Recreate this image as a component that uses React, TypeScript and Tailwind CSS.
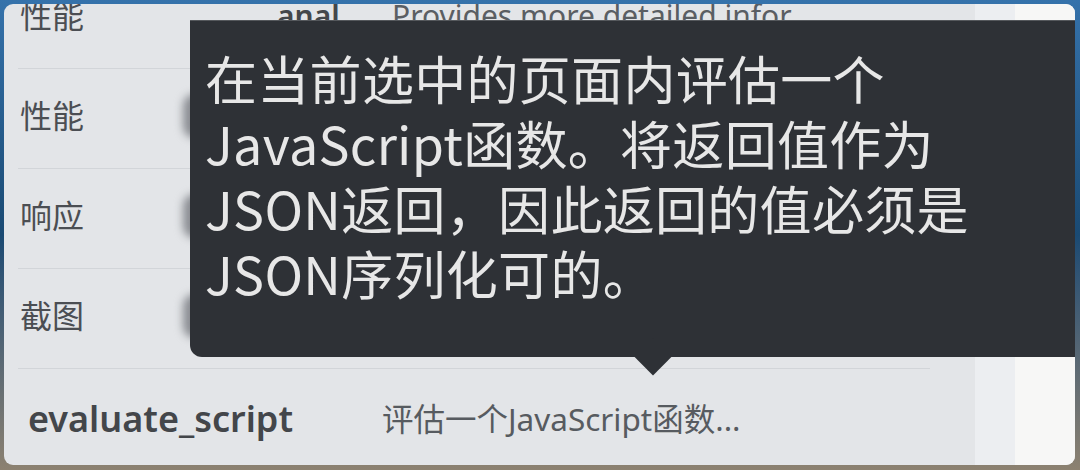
import React from "react";

const CJK = '"Noto Sans", "Noto Sans CJK SC", sans-serif';
const CJK_ONLY = '"Noto Sans CJK SC", "Noto Sans", sans-serif';

function Row({
  label,
  children,
  blob = false,
}: {
  label?: string;
  children?: React.ReactNode;
  blob?: boolean;
}) {
  return (
    <div className="h-[100px] shrink-0 ml-[14px] mr-[45px] pb-[6px] border-b border-[#d2d5d9] flex items-center">
      {label !== undefined && (
        <div className="w-[165px] pl-[2px] text-[32px] text-[#4b4e53] leading-none">{label}</div>
      )}
      {blob && <div className="w-[40px] h-[44px] rounded-[12px] bg-[#8a8d92] blur-[4px]" />}
      {children}
    </div>
  );
}

export default function App() {
  return (
    <div
      className="w-[1080px] h-[470px] pt-[4px] pl-[4px] pr-[5px] pb-[5px] bg-gradient-to-b from-[#3572ab] via-[#1a4a73] to-[#8c8170]"
      style={{ fontFamily: CJK }}
    >
      <div className="relative h-full w-full rounded-[9px] overflow-hidden bg-[#e3e5e8] flex">
        <div className="w-[971px] flex flex-col mt-[-35px]">
          <Row label="性能">
            <div className="ml-[94px] w-[62px] text-[30px] font-semibold text-[#44474b] leading-none whitespace-nowrap overflow-hidden">
              analyze_performance
            </div>
            <div className="ml-[53px] text-[30px] text-[#5a5e63] leading-none whitespace-nowrap">
              Provides more detailed infor
            </div>
          </Row>
          <Row label="性能" blob />
          <Row label="响应" blob />
          <Row label="截图" blob />
          <div className="h-[100px] shrink-0 ml-[14px] mr-[45px] flex items-center">
            <div className="w-[364px] pl-[10px] text-[36px] font-semibold text-[#43464a] leading-none whitespace-nowrap">
              evaluate_script
            </div>
            <div className="text-[31.5px] text-[#575b60] leading-none whitespace-nowrap">
              评估一个JavaScript函数...
            </div>
          </div>
        </div>
        <div className="w-[40px] bg-[#eceef1]" />
        <div className="flex-1 bg-[#f7f7f6]" />

        <div className="absolute left-[186px] top-[16px] right-0 h-[337px] bg-[#2e3136] rounded-bl-[12px] border-t border-[#55585c]">
          <div
            className="pl-[15px] pt-[24px] text-[52px] leading-[65px] tracking-[0.3px] text-[#e7e7e7] whitespace-nowrap"
            style={{ fontFamily: CJK_ONLY }}
          >
            <div>在当前选中的页面内评估一个</div>
            <div>JavaScript函数。将返回值作为</div>
            <div>JSON返回，因此返回的值必须是</div>
            <div>JSON序列化可的。</div>
          </div>
          <div className="absolute left-[450px] top-[323px] w-[26px] h-[26px] rotate-45 bg-[#2e3136]" />
        </div>
      </div>
    </div>
  );
}
